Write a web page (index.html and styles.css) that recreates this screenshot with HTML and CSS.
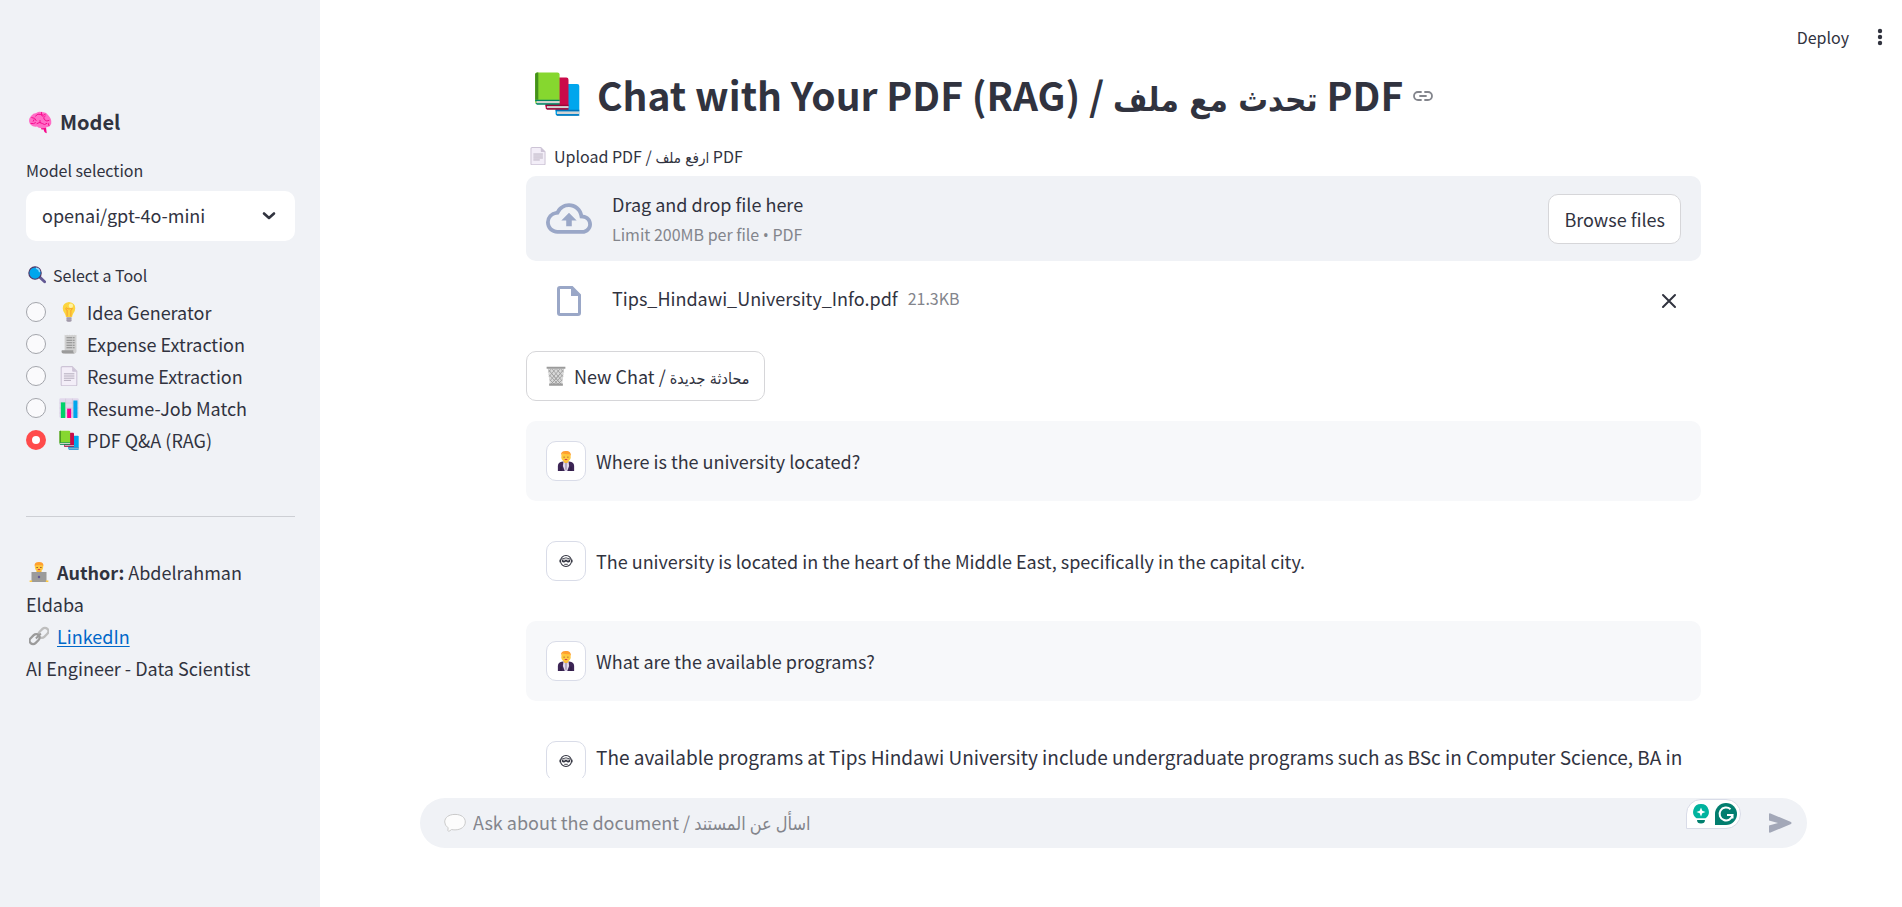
FILE: index.html
```html
<!DOCTYPE html>
<html lang="en">
<head>
<meta charset="utf-8">
<title>Chat with Your PDF (RAG)</title>
<link rel="stylesheet" href="styles.css">
</head>
<body>
<svg class="sprite" aria-hidden="true">
  <symbol id="books" viewBox="0 0 32 32">
    <rect x="15" y="9" width="16.500" height="22" rx="1.500" fill="#00a6ed"/>
    <path d="M16 28h15.500v2H16z" fill="#d3d3d3"/><path d="M15 27h16.500v1H15zM15 30h16.500v1.200H16z" fill="#0074ba"/>
    <rect x="8" y="4.500" width="16" height="22" rx="1.500" fill="#ca0b4a"/>
    <path d="M8 23.500h16v1H8zM8 25.800h16v1.200H9z" fill="#990838"/><path d="M9 24.400h15v1.400H9z" fill="#d3d3d3"/>
    <rect x=".8" y="1" width="17" height="22" rx="1.500" fill="#86d72f"/>
    <path d="M2.300 1H3v19H.8V2.500Q.8 1 2.300 1z" fill="#44911b"/><path d="M.8 20h17v1h-17zM1 22.300h16.800v1.200H2z" fill="#008463"/><path d="M1.800 20.900h16v1.500h-16z" fill="#d3d3d3"/>
  </symbol>
  <symbol id="page" viewBox="0 0 32 32">
    <path d="M5.500 1h15.500L28.500 8.500V30q0 1.500-1.500 1.500H5Q3.500 31.500 3.500 30V3Q3.500 1 5.500 1z" fill="#f3eef8" stroke="#cdc4d6" stroke-width="1.800"/>
    <path d="M21 1v6.500q0 1.500 1.500 1.500h6z" fill="#cdc4d6"/>
    <path d="M8.500 12.500h15.500M8.500 16h15.500M8.500 19.500h15.500M8.500 23h10" stroke="#b4acbc" stroke-width="1.600" stroke-linecap="round"/>
  </symbol>
  <symbol id="butler" viewBox="0 0 32 32">
    <path d="M3 32v-8q0-6 6-7l7-1 7 1q6 1 6 7v8z" fill="#3c2555"/>
    <path d="M12 16h8l1 8-3 8h-4l-3-8z" fill="#e1d8ec"/><path d="M15 18h2v12h-2z" fill="#998ea4"/>
    <rect x="12" y="12" width="8" height="7" rx="3" fill="#f9b531"/>
    <rect x="8.500" y="2" width="15" height="15" rx="7" fill="#ffc83d"/>
    <path d="M8 8Q7 0 15 0q9-1 9 8l-2-3q-6 1-11-1-3 1-3 4z" fill="#ff9f2e"/>
    <path d="M12 9h2v1.500h-2zM18 9h2v1.500h-2z" fill="#7d4533"/><path d="M14 13h4v1.500h-4z" fill="#d52b4a"/>
    <path d="M8 25v7M24 25v7" stroke="#1f122e"/>
  </symbol>
  <symbol id="robot" viewBox="0 0 16 16">
    <circle cx="8" cy="8" r="6.300" fill="#fff" stroke="#31333f" stroke-width="1.200"/>
    <path d="M2.500 6Q8 2.800 13.500 6" fill="none" stroke="#31333f"/>
    <path d="M3.300 6.500h9.400v2.200q-1.200 1.500-3.200.8L8 8.700l-1.500.8q-2 .7-3.200-.8z" fill="#31333f"/>
    <path d="M5 7.500h1.500M9.500 7.500H11" stroke="#fff" stroke-width=".8"/>
    <path d="M1 6.500v3M15 6.500v3" stroke="#31333f"/><path d="M6 11.800h4" stroke="#31333f"/>
  </symbol>
</svg>

<div class="app">
  <aside class="sidebar">
    <h3 class="sidebar-title">
      <svg class="emoji-heading" viewBox="0 0 32 32" aria-hidden="true">
        <path d="M17 23h7l1 8q-4-1-4-5h-3z" fill="#f70a8d"/>
        <path d="M4 8Q7 4 11 4q4-3 8-1 5-1 8 4 5 5 4 11-1 4-6 5-4 2-8 1-3 0-5-2-5 1-8-2-4-4-2-9z" fill="#ff6dc6"/>
        <path d="M5 10q5 0 6 4M10 8q3-4 7-2t6 0M18 3q-2 4 2 6M23 8q-4 2-1 5t6 1M12 18q4-3 7 0t6 0M16 17v-3M4 18q4 1 6-1M27 18l1 3M8 13l-1 2" fill="none" stroke="#f70a8d" stroke-width="1.300" stroke-linecap="round"/>
      </svg>
      Model
    </h3>
    <label class="field-label" for="model">Model selection</label>
    <div class="select-wrap">
      <select id="model" class="select"><option>openai/gpt-4o-mini</option></select>
      <svg class="chevron" viewBox="0 0 14 10" aria-hidden="true"><path d="M2 2.500l5 4.500 5-4.500" fill="none" stroke="#31333f" stroke-width="2.600" stroke-linecap="round" stroke-linejoin="round"/></svg>
    </div>
    <fieldset class="tools">
      <legend class="field-label tools-label">
        <svg class="emoji-small" viewBox="0 0 32 32" aria-hidden="true">
          <path d="M19 18l10.500 10" stroke="#635994" stroke-width="5" stroke-linecap="round"/>
          <circle cx="12.500" cy="12.500" r="11" fill="#00a6ed" stroke="#533566" stroke-width="2"/>
          <path d="M15 4q5 1 5.500 6" fill="none" stroke="#8cd9ff" stroke-width="2.500" stroke-linecap="round"/>
        </svg>
        Select a Tool
      </legend>
      <label class="tool"><input class="radio" type="radio" name="tool">
        <svg class="emoji" viewBox="0 0 32 32" aria-hidden="true">
          <path d="M12 24h8v6q-1 2-4 2t-4-2z" fill="#b4acbc"/><path d="M12 27h8M12 30h8" stroke="#8b8494"/>
          <path d="M16 0q10 1 10 10 0 4-3 8-2 3-2 6H11q0-3-2-6-3-4-3-8Q6 1 16 0z" fill="#fcd53f"/>
          <path d="M13 23V13q-3-1-2-3t3 1h4q1-2 3-1t-2 3v10" fill="none" stroke="#f9a12d" stroke-width="1.600"/><circle cx="19" cy="6" r="3.500" fill="#fff3a0"/>
        </svg>Idea Generator</label>
      <label class="tool"><input class="radio" type="radio" name="tool">
        <svg class="emoji" viewBox="0 0 32 32" aria-hidden="true">
          <path d="M9 1l2 1 2-1 2 1 2-1 2 1 2-1 2 1 2-1 2 1 1-1v26q0 4-4 4H9z" fill="#d0d0d0"/>
          <path d="M5 26h18q-1 5 3 5H7q-3 0-3-3 0-2 1-2z" fill="#9b9b9b"/>
          <path d="M12 6h13M12 10h13M12 14h13M12 18h13M12 22h13" stroke="#8a8a8a" stroke-width="1.800" stroke-dasharray="9 1"/>
        </svg>Expense Extraction</label>
      <label class="tool"><input class="radio" type="radio" name="tool"><svg class="emoji" aria-hidden="true"><use href="#page"/></svg>Resume Extraction</label>
      <label class="tool"><input class="radio" type="radio" name="tool">
        <svg class="emoji" viewBox="0 0 32 32" aria-hidden="true">
          <rect x=".5" y=".5" width="31" height="31" rx="2" fill="#e1d8ec"/>
          <path d="M10.500 1v30M21.500 1v30M1 8h30M1 16h30M1 24h30" stroke="#cdc4d6"/>
          <path d="M3 7h7v25H3z" fill="#00d26a"/><path d="M13 17h6.500v15H13z" fill="#ff0090"/><path d="M23 4h6.500v28H23z" fill="#00a6ed"/>
        </svg>Resume-Job Match</label>
      <label class="tool"><input class="radio" type="radio" name="tool" checked><svg class="emoji" aria-hidden="true"><use href="#books"/></svg>PDF Q&amp;A (RAG)</label>
    </fieldset>
    <hr class="divider">
    <div class="author">
      <p><svg class="emoji emoji-inline" viewBox="0 0 32 32" aria-hidden="true">
          <path d="M5 20q1-4 8-4h6q7 0 8 4z" fill="#635994"/><rect x="12" y="11" width="8" height="7" fill="#f9b531"/>
          <rect x="9.500" y="1.500" width="13" height="13" rx="6" fill="#ffc83d"/>
          <path d="M9 7Q8 0 16 0t7 7l-2-2H11z" fill="#ff9f2e"/>
          <path d="M12 8h2v1.500h-2zM18 8h2v1.500h-2z" fill="#7d4533"/><path d="M14 11.500h4v1.500h-4z" fill="#d52b4a"/>
          <path d="M4 16h24v15H4z" fill="#9b9b9b"/><circle cx="16" cy="24" r="2" fill="#635994"/><path d="M1 29.500h30V32H1z" fill="#ffc83d"/><path d="M5 29h22v3H5z" fill="#9b9b9b"/>
        </svg><strong>Author:</strong> Abdelrahman Eldaba</p>
      <p><svg class="emoji emoji-inline" viewBox="0 0 32 32" aria-hidden="true">
          <g fill="none" stroke-width="3.600"><rect x="14" y="5.500" width="18" height="11" rx="5.500" transform="rotate(-45 23 11)" stroke="#bebebe"/>
          <rect x="0" y="15.500" width="18" height="11" rx="5.500" transform="rotate(-45 9 21)" stroke="#9b9b9b"/></g><path d="M11 20l8-8" stroke="#9b9b9b" stroke-width="3"/>
        </svg><a class="link" href="#">LinkedIn</a></p>
      <p>AI Engineer - Data Scientist</p>
    </div>
  </aside>

  <main class="main">
    <header class="toolbar">
      <button class="deploy" type="button">Deploy</button>
      <button class="icon-button" type="button" aria-label="Menu"><svg class="dots" viewBox="0 0 6 18"><circle cx="3" cy="3" r="2.200"/><circle cx="3" cy="9" r="2.200"/><circle cx="3" cy="15" r="2.200"/></svg></button>
    </header>

    <div class="scroll">
      <div class="content">
        <h1 class="title">
          <svg class="emoji-title" aria-hidden="true"><use href="#books"/></svg>
          <span>Chat with Your PDF (RAG) / <span class="ar" lang="ar">تحدث مع ملف</span> PDF</span>
          <a class="anchor" href="#" aria-label="Link to heading"><svg class="anchor-icon" viewBox="0 0 20 10" fill="none" stroke="#83858c" stroke-width="1.800" stroke-linecap="round"><path d="M8 1H5a4 4 0 0 0 0 8h3M12 1h3a4 4 0 0 1 0 8h-3M7 5h6"/></svg></a>
        </h1>

        <label class="field-label upload-label" for="file"><svg class="emoji-small" aria-hidden="true"><use href="#page"/></svg><span>Upload PDF / <span class="ar" lang="ar">ارفع ملف</span> PDF</span></label>
        <section class="dropzone">
          <svg class="cloud" viewBox="0 1 24 16" aria-hidden="true"><path d="M19.350 7.040A7.490 7.490 0 0 0 12 1C9.110 1 6.600 2.640 5.350 5.040A5.994 5.994 0 0 0 0 11c0 3.310 2.690 6 6 6h13c2.760 0 5-2.240 5-5 0-2.640-2.050-4.780-4.650-4.960zM19 15H6c-2.210 0-4-1.790-4-4 0-2.050 1.530-3.760 3.560-3.970l1.070-.110.500-.950A5.469 5.469 0 0 1 12 3c2.620 0 4.880 1.860 5.390 4.430l.3 1.500 1.530.110A2.980 2.980 0 0 1 22 12c0 1.650-1.350 3-3 3zM8 10h2.550v3h2.900v-3H16l-4-4z"/></svg>
          <div class="drop-text"><span class="drop-line">Drag and drop file here</span><small class="muted drop-line">Limit 200MB per file <span class="bullet">•</span> PDF</small></div>
          <button id="file" class="button" type="button">Browse files</button>
        </section>
        <div class="file">
          <svg class="file-icon" viewBox="0 0 24 30" aria-hidden="true"><path d="M3 1.500h12L22.500 9v18q0 1.500-1.500 1.500H3q-1.500 0-1.500-1.500V3Q1.500 1.500 3 1.500z" fill="none" stroke="#9aa7c7" stroke-width="3"/><path d="M14 1.500V10h9z" fill="#9aa7c7"/></svg>
          <div class="file-info"><span>Tips_Hindawi_University_Info.pdf</span><small class="muted">21.3KB</small></div>
          <button class="icon-button remove" type="button" aria-label="Remove file"><svg class="cross" viewBox="0 0 16 16"><path d="M2 2l12 12M14 2L2 14" stroke="#31333f" stroke-width="2" stroke-linecap="round"/></svg></button>
        </div>

        <button class="button new-chat" type="button">
          <svg class="emoji" viewBox="0 0 32 32" aria-hidden="true">
            <path d="M3 4h26l-3 25H6z" fill="#d8d8d8"/>
            <path d="M4 6l10 12 10 11M10 5l15 18M17 5l10 12M24 5l4 5M5 14l14 15M6 22l7 7M28 6L18 18 8 29M22 5L7 23M15 5L5 17M8 5l-4 5M27 14L13 29M26 22l-7 7" stroke="#9b9b9b" stroke-width="1.300"/>
            <path d="M1 1h30v3.500H1zM5 28h22v3.500H5z" fill="#9b9b9b"/>
          </svg>
          <span>New Chat / <span class="ar" lang="ar">محادثة جديدة</span></span>
        </button>

        <article class="message message-user"><span class="avatar"><svg class="emoji" aria-hidden="true"><use href="#butler"/></svg></span><p class="message-text">Where is the university located?</p></article>
        <article class="message"><span class="avatar"><svg class="robot" aria-hidden="true"><use href="#robot"/></svg></span><p class="message-text">The university is located in the heart of the Middle East, specifically in the capital city.</p></article>
        <article class="message message-user"><span class="avatar"><svg class="emoji" aria-hidden="true"><use href="#butler"/></svg></span><p class="message-text">What are the available programs?</p></article>
        <article class="message message-long"><span class="avatar"><svg class="robot" aria-hidden="true"><use href="#robot"/></svg></span><p class="message-text">The available programs at Tips Hindawi University include undergraduate programs such as BSc in Computer Science, BA in</p></article>
      </div>
    </div>

    <form class="composer">
      <div class="chat-input">
        <svg class="balloon" viewBox="0 0 32 28" aria-hidden="true"><path d="M16 1.500C25 1.500 31 6 31 12.500S25 24 16 24q-3 0-5-.5Q8 26 6.500 26t-.5-5Q1 17.500 1 12.500C1 6 7 1.500 16 1.500z" fill="#fcfcfc" stroke="#c8c8c8" stroke-width="1.400"/></svg>
        <input class="chat-field" type="text" aria-label="Ask about the document" placeholder="Ask about the document / اسأل عن المستند">
        <button class="icon-button" type="submit" aria-label="Send"><svg class="send" viewBox="0 0 23 20" aria-hidden="true"><path d="M0 1.300Q0 0 1.500.5L22 9q1 1 0 2L1.500 19.500Q0 20 0 18.700V12.500L9 10 0 7.500z" fill="#a3a8b8"/></svg></button>
        <div class="assistant">
          <svg class="bulb" viewBox="0 0 16 20" aria-hidden="true"><path d="M8 0a7.800 7.800 0 0 1 4.500 14.200h-9A7.800 7.800 0 0 1 8 0z" fill="#00b39e"/><path d="M8 3.500l1.300 3.200 3.200 1.300-3.200 1.300L8 12.500 6.700 9.300 3.500 8l3.200-1.300z" fill="#fff"/><path d="M4 16h8q0 3.500-4 3.500T4 16z" fill="#00806f"/></svg>
          <svg class="gram" viewBox="0 0 22 22" aria-hidden="true"><path d="M0 22V11A11 11 0 1 1 11 22z" fill="#027e6f"/><path d="M15.500 6.200A6.500 6.500 0 1 0 17.500 12H12M17.500 12v3.500" fill="none" stroke="#fff" stroke-width="2"/></svg>
        </div>
      </div>
    </form>
  </main>
</div>
</body>
</html>
```
FILE: styles.css
```css
:root {
  --text: #31333f;
  --muted: #83858c;
  --panel: #f0f2f6;
  --border: #d6d6d9;
}

* { box-sizing: border-box; }

body {
  margin: 0;
  color: var(--text);
  background: #fff;
  font-family: "Noto Sans CJK SC", "DejaVu Sans Condensed", "DejaVu Sans", sans-serif;
  font-size: 18px;
  line-height: 32px;
}

button, input, select { font: inherit; color: inherit; }
button { cursor: pointer; }
p, h1, h3 { margin: 0; }
svg { flex: none; display: block; }
.sprite { position: absolute; width: 0; height: 0; }
.ar {
  font-family: "DejaVu Sans Condensed", "DejaVu Sans", sans-serif;
  font-size: 16px;
  line-height: 1;
}
.muted { color: var(--muted); font-size: 16px; }

.app { display: flex; height: 100vh; }

/* Sidebar */
.sidebar {
  flex: none;
  width: 320px;
  padding: 106px 25px 0 26px;
  background: var(--panel);
}
.sidebar-title {
  display: flex;
  align-items: center;
  gap: 8px;
  padding-left: 2px;
  font-size: 20px;
  font-weight: 700;
}
.field-label { display: block; font-size: 16px; line-height: 28px; }
.sidebar-title + .field-label { margin: 18px 0 7px; }
.select-wrap { position: relative; }
.select {
  display: block;
  width: 100%;
  height: 50px;
  padding: 0 16px 2px;
  border: 0;
  border-radius: 10px;
  background: #fff;
  appearance: none;
}
.chevron {
  position: absolute;
  top: 20px;
  right: 19px;
  width: 14px;
  height: 10px;
  pointer-events: none;
}
.tools { margin: 20px 0 0; padding: 0; border: 0; min-width: 0; }
.tools-label { display: flex; align-items: center; gap: 7px; padding: 0 0 7px 2px; }
.tool { display: flex; align-items: center; }
.tool .emoji { margin: 0 8px 0 13px; }
.radio {
  flex: none;
  width: 20px;
  height: 20px;
  margin: 0;
  border: 1px solid #a3a5ab;
  border-radius: 50%;
  background: #fafafc;
  appearance: none;
}
.radio:checked { border: 6px solid #ff4b4b; background: #fff; }
.divider { margin: 60px 0 39px; border: 0; border-top: 1px solid #cdcfd4; }
.emoji { width: 20px; height: 20px; }
.emoji-small { width: 18px; height: 18px; }
.emoji-heading { width: 24px; height: 24px; }
.emoji-inline { display: inline-block; margin: 0 8px 0 3px; vertical-align: -2px; }
.author strong { font-weight: 700; }
.link { color: #0068c9; text-decoration: underline; text-underline-offset: 2px; }

/* Main column */
.main { flex: 1; min-width: 0; display: flex; flex-direction: column; }
.toolbar {
  display: flex;
  flex: none;
  align-items: center;
  justify-content: flex-end;
  gap: 20px;
  height: 60px;
  padding: 14px 12px 0 0;
}
.deploy { padding: 0; border: 0; background: none; font-size: 16px; }
.toolbar .icon-button { padding-left: 8px; }
.icon-button {
  display: flex;
  align-items: center;
  justify-content: center;
  padding: 0 7px;
  border: 0;
  background: none;
}
.dots { width: 6px; height: 18px; fill: var(--text); }
.scroll { flex: 1; min-height: 0; overflow: hidden; padding: 0 95px 0 100px; }
.content { max-width: 1175px; margin: 0 auto; }

.title {
  display: flex;
  align-items: center;
  padding: 7px 0 7px 8px;
  font-size: 39px;
  font-weight: 700;
  line-height: 54px;
}
.title .ar { font-size: 33px; }
.emoji-title { width: 46px; height: 46px; margin-right: 17px; }
.anchor { padding: 4px 0 0 10px; }
.anchor-icon { width: 20px; height: 10px; }
.upload-label { display: flex; align-items: center; gap: 7px; margin: 14px 0 6px; padding-left: 3px; }
.upload-label .ar { font-size: 15px; }

.dropzone {
  display: flex;
  align-items: center;
  min-height: 85px;
  padding: 12px 20px;
  border-radius: 10px;
  background: var(--panel);
}
.cloud { width: 46px; height: 31px; margin-right: 20px; fill: #9aa7c7; }
.drop-text { display: flex; flex: 1; flex-direction: column; }
.drop-line { line-height: 30px; }
.bullet { font-family: "Open Sans", sans-serif; line-height: 1; }
.button {
  height: 50px;
  padding: 0 15px;
  border: 1px solid var(--border);
  border-radius: 10px;
  background: #fff;
}
.file { display: flex; align-items: center; height: 80px; padding: 0 17px 0 31px; }
.file-icon { width: 24px; height: 30px; margin-right: 31px; }
.file-info { display: flex; gap: 10px; padding-bottom: 6px; }
.remove { margin-left: auto; }
.cross { width: 16px; height: 16px; }
.new-chat { display: flex; align-items: center; gap: 8px; margin: 10px 0 20px; padding: 0 15px 0 19px; }

.message {
  display: flex;
  align-items: center;
  gap: 10px;
  min-height: 80px;
  margin-bottom: 20px;
  padding: 20px;
  border-radius: 10px;
}
.message-user { background: #f7f8fa; }
.message-long { align-items: flex-start; padding-right: 0; font-size: 19px; }
.message-text { flex: 1; min-width: 0; }
.avatar {
  display: flex;
  flex: none;
  align-items: center;
  justify-content: center;
  width: 40px;
  height: 40px;
  border: 1px solid #d9dce8;
  border-radius: 10px;
  background: #fff;
}
.robot { width: 14px; height: 14px; }

/* Composer */
.composer { flex: none; padding: 20px 95px 59px 100px; }
.chat-input {
  position: relative;
  display: flex;
  align-items: center;
  height: 50px;
  padding: 0 8px 0 24px;
  border-radius: 25px;
  background: var(--panel);
}
.balloon { width: 22px; height: 20px; }
.chat-field { flex: 1; min-width: 0; height: 50px; padding: 0 0 3px 7px; border: 0; outline: 0; background: none; }
.chat-field::placeholder { color: var(--muted); opacity: 1; }
.send { width: 23px; height: 20px; }
.assistant {
  position: absolute;
  top: 1px;
  right: 66px;
  display: flex;
  align-items: center;
  gap: 6px;
  width: 55px;
  height: 30px;
  padding-left: 6px;
  border: 1px solid #d9dce8;
  border-radius: 15px 15px 15px 0;
  background: #fff;
}
.bulb { width: 16px; height: 20px; }
.gram { width: 22px; height: 22px; }
```
